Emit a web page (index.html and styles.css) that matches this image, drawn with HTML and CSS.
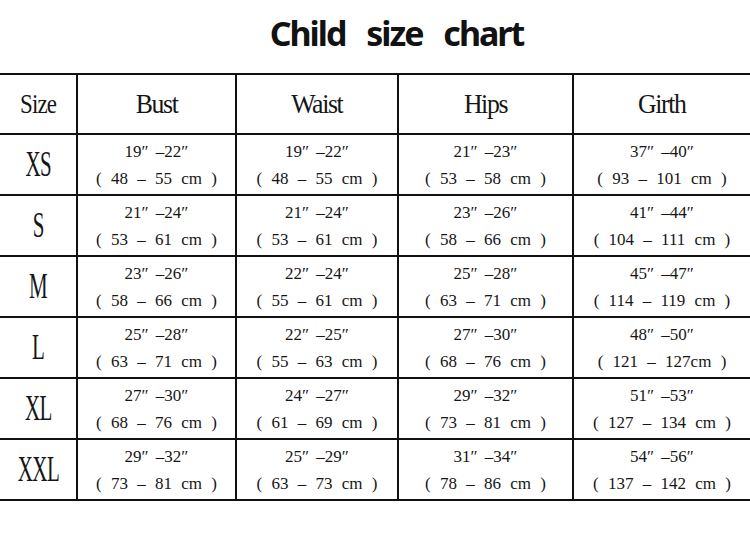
FILE: index.html
```html
<!DOCTYPE html>
<html>
<head>
<meta charset="utf-8">
<link rel="stylesheet" href="styles.css">
</head>
<body>
<div class="page">
  <h1 class="title">Child size chart</h1>
  <table class="chart">
    <colgroup>
      <col class="c-size"><col class="c-bust"><col class="c-waist"><col class="c-hips"><col class="c-girth">
    </colgroup>
    <thead>
      <tr class="head">
        <th><span class="hd hd-size">Size</span></th>
        <th><span class="hd">Bust</span></th>
        <th><span class="hd">Waist</span></th>
        <th><span class="hd">Hips</span></th>
        <th><span class="hd">Girth</span></th>
      </tr>
    </thead>
    <tbody>
      <tr>
        <td class="sz"><span class="lbl">XS</span></td>
        <td><div class="in">19″ –22″</div><div class="cm">( 48 – 55 cm )</div></td>
        <td><div class="in">19″ –22″</div><div class="cm">( 48 – 55 cm )</div></td>
        <td><div class="in">21″ –23″</div><div class="cm">( 53 – 58 cm )</div></td>
        <td><div class="in">37″ –40″</div><div class="cm">( 93 – 101 cm )</div></td>
      </tr>
      <tr>
        <td class="sz"><span class="lbl">S</span></td>
        <td><div class="in">21″ –24″</div><div class="cm">( 53 – 61 cm )</div></td>
        <td><div class="in">21″ –24″</div><div class="cm">( 53 – 61 cm )</div></td>
        <td><div class="in">23″ –26″</div><div class="cm">( 58 – 66 cm )</div></td>
        <td><div class="in">41″ –44″</div><div class="cm">( 104 – 111 cm )</div></td>
      </tr>
      <tr>
        <td class="sz"><span class="lbl">M</span></td>
        <td><div class="in">23″ –26″</div><div class="cm">( 58 – 66 cm )</div></td>
        <td><div class="in">22″ –24″</div><div class="cm">( 55 – 61 cm )</div></td>
        <td><div class="in">25″ –28″</div><div class="cm">( 63 – 71 cm )</div></td>
        <td><div class="in">45″ –47″</div><div class="cm">( 114 – 119 cm )</div></td>
      </tr>
      <tr>
        <td class="sz"><span class="lbl">L</span></td>
        <td><div class="in">25″ –28″</div><div class="cm">( 63 – 71 cm )</div></td>
        <td><div class="in">22″ –25″</div><div class="cm">( 55 – 63 cm )</div></td>
        <td><div class="in">27″ –30″</div><div class="cm">( 68 – 76 cm )</div></td>
        <td><div class="in">48″ –50″</div><div class="cm">( 121 – 127cm )</div></td>
      </tr>
      <tr>
        <td class="sz"><span class="lbl">XL</span></td>
        <td><div class="in">27″ –30″</div><div class="cm">( 68 – 76 cm )</div></td>
        <td><div class="in">24″ –27″</div><div class="cm">( 61 – 69 cm )</div></td>
        <td><div class="in">29″ –32″</div><div class="cm">( 73 – 81 cm )</div></td>
        <td><div class="in">51″ –53″</div><div class="cm">( 127 – 134 cm )</div></td>
      </tr>
      <tr>
        <td class="sz"><span class="lbl">XXL</span></td>
        <td><div class="in">29″ –32″</div><div class="cm">( 73 – 81 cm )</div></td>
        <td><div class="in">25″ –29″</div><div class="cm">( 63 – 73 cm )</div></td>
        <td><div class="in">31″ –34″</div><div class="cm">( 78 – 86 cm )</div></td>
        <td><div class="in">54″ –56″</div><div class="cm">( 137 – 142 cm )</div></td>
      </tr>
    </tbody>
  </table>
</div>
</body>
</html>
```

FILE: styles.css
```css
html, body {
  margin: 0;
  padding: 0;
  background: #ffffff;
}

.page {
  width: 750px;
  height: 550px;
  overflow: hidden;
  background: #ffffff;
  color: #111111;
}

.title {
  margin: 0;
  height: 73px;
  padding-left: 43px;
  box-sizing: border-box;
  padding-top: 8px;
  text-align: center;
  font-family: "Noto Sans", "Open Sans", sans-serif;
  font-weight: 700;
  font-size: 34px;
  line-height: 50px;
  letter-spacing: -2px;
  word-spacing: 14px;
  color: #121212;
}

.chart {
  width: 750px;
  border-collapse: collapse;
  table-layout: fixed;
  font-family: "Liberation Serif", "DejaVu Serif", serif;
  color: #161616;
}

.c-size { width: 77px; }
.c-bust { width: 159px; }
.c-waist { width: 162px; }
.c-hips { width: 175px; }
.c-girth { width: 177px; }

.chart th,
.chart td {
  border: 2px solid #111111;
  padding: 0;
  text-align: center;
  vertical-align: middle;
}

.chart tr > :first-child { border-left: none; }
.chart tr > :last-child { border-right: none; }

.head { height: 60px; }
.chart tbody tr { height: 61px; }

.hd {
  display: inline-block;
  font-weight: 400;
  font-size: 28px;
  letter-spacing: -1.5px;
  transform: scaleX(0.92);
}

.hd-size {
  transform: scaleX(0.82);
  letter-spacing: -1px;
}

.sz {
  font-size: 35px;
}

.lbl {
  display: inline-block;
  transform: scaleX(0.6);
  letter-spacing: -1px;
  line-height: 40px;
}

.in,
.cm {
  font-size: 17px;
  line-height: 27px;
}

.in {
  word-spacing: 3px;
}

.cm {
  word-spacing: 5px;
}
```
